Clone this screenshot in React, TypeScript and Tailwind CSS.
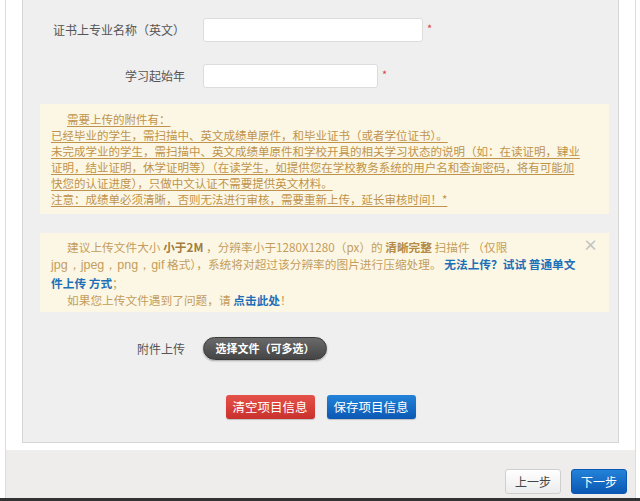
const font = "font-['Microsoft_YaHei','Noto_Sans_CJK_SC',sans-serif]";

function FormRow({
  label,
  inputWidth,
}: {
  label: string;
  inputWidth: string;
}) {
  return (
    <div className="flex items-center">
      <div className="w-[162px] text-right text-[12px] text-[#555]">{label}</div>
      <div className={`ml-[18px] h-[24px] rounded-[3px] border border-[#dcdcdc] bg-white ${inputWidth}`} />
      <span className="ml-[4px] -mt-[4px] text-[11px] text-[#e04040]">*</span>
    </div>
  );
}

export default function App() {
  return (
    <div className={`flex h-[501px] w-[640px] flex-col overflow-hidden bg-white ${font}`}>
      <div className="ml-[5px] flex w-[631px] flex-1 flex-col border-x border-[#dcdcdc]">
        <div className="px-[16px] pb-[7px]">
          <div className="flex flex-col border border-t-0 border-[#d6d6d6] bg-[#efefef] pb-[23px] pt-[18px]">
            <FormRow label="证书上专业名称（英文）" inputWidth="w-[220px]" />
            <div className="mt-[22px]">
              <FormRow label="学习起始年" inputWidth="w-[175px]" />
            </div>

            <div className="ml-[17px] mr-[9px] mt-[16px] whitespace-nowrap bg-[#fcf7e4] pb-[7px] pl-[11px] pt-[7px] text-[11.5px] leading-[16px] text-[#bf934b] underline underline-offset-2">
              <div className="pl-[16px]">需要上传的附件有：</div>
              <div>已经毕业的学生，需扫描中、英文成绩单原件，和毕业证书（或者学位证书）。</div>
              <div>未完成学业的学生，需扫描中、英文成绩单原件和学校开具的相关学习状态的说明（如：在读证明，肄业</div>
              <div>证明，结业证明，休学证明等）（在读学生，如提供您在学校教务系统的用户名和查询密码，将有可能加</div>
              <div>快您的认证进度），只做中文认证不需要提供英文材料。</div>
              <div>注意：成绩单必须清晰，否则无法进行审核，需要重新上传，延长审核时间！*</div>
            </div>

            <div className="relative ml-[17px] mr-[9px] mt-[19px] whitespace-nowrap bg-[#fcf7e4] pb-[4px] pl-[11px] pt-[5px] text-[11.7px] leading-[17px] text-[#c49d5c]">
              <span className="absolute right-[11px] top-[3px] text-[15px] font-bold text-[#c4c4c4]">×</span>
              <div className="pl-[16px]">
                建议上传文件大小 <b className="text-[#a27c41]">小于2M</b> ，分辨率小于1280X1280（px）的 <span className="font-semibold text-[#b48a45]">清晰完整</span> 扫描件 （仅限
              </div>
              <div>
                <span className="font-['Liberation_Sans',sans-serif] text-[12.5px]">jpg，jpeg，png，gif</span> 格式），系统将对超过该分辨率的图片进行压缩处理。 <b className="text-[#1d6fb8]">无法上传？试试 普通单文</b>
              </div>
              <div>
                <b className="text-[#1d6fb8]">件上传 方式</b>；
              </div>
              <div className="pl-[16px]">
                如果您上传文件遇到了问题，请 <b className="text-[#1d6fb8]">点击此处</b>！
              </div>
            </div>

            <div className="mt-[25px] flex items-center">
              <div className="w-[162px] text-right text-[12px] text-[#555]">附件上传</div>
              <button className="ml-[18px] h-[23px] w-[124px] rounded-full border border-[#3a3a3a] bg-gradient-to-b from-[#6a6a6a] to-[#454545] text-[11px] font-bold text-white shadow-[0_1px_2px_rgba(0,0,0,0.3)]">
                选择文件（可多选）
              </button>
            </div>

            <div className="mt-[35px] flex justify-center gap-[12px]">
              <button className="h-[24px] w-[89px] rounded-[3px] bg-gradient-to-b from-[#e5524a] to-[#c9302c] text-[12.5px] text-white shadow-[0_1px_1px_rgba(0,0,0,0.2)]">
                清空项目信息
              </button>
              <button className="h-[24px] w-[89px] rounded-[3px] bg-gradient-to-b from-[#2383d9] to-[#0b58b4] text-[12.5px] text-white shadow-[0_1px_1px_rgba(0,0,0,0.2)]">
                保存项目信息
              </button>
            </div>
          </div>
        </div>

        <div className="flex flex-1 items-end justify-end gap-[10px] bg-[#efecec] pb-[4px] pr-[8px]">
          <button className="h-[25px] w-[56px] rounded-[3px] border border-[#cfcfcf] bg-gradient-to-b from-white to-[#ececec] text-[12px] text-[#444]">
            上一步
          </button>
          <button className="h-[25px] w-[56px] rounded-[3px] border border-[#0b58b4] bg-gradient-to-b from-[#2383d9] to-[#0b58b4] text-[12px] text-white">
            下一步
          </button>
        </div>
      </div>
      <div className="h-[3px] bg-[#333]" />
    </div>
  );
}
